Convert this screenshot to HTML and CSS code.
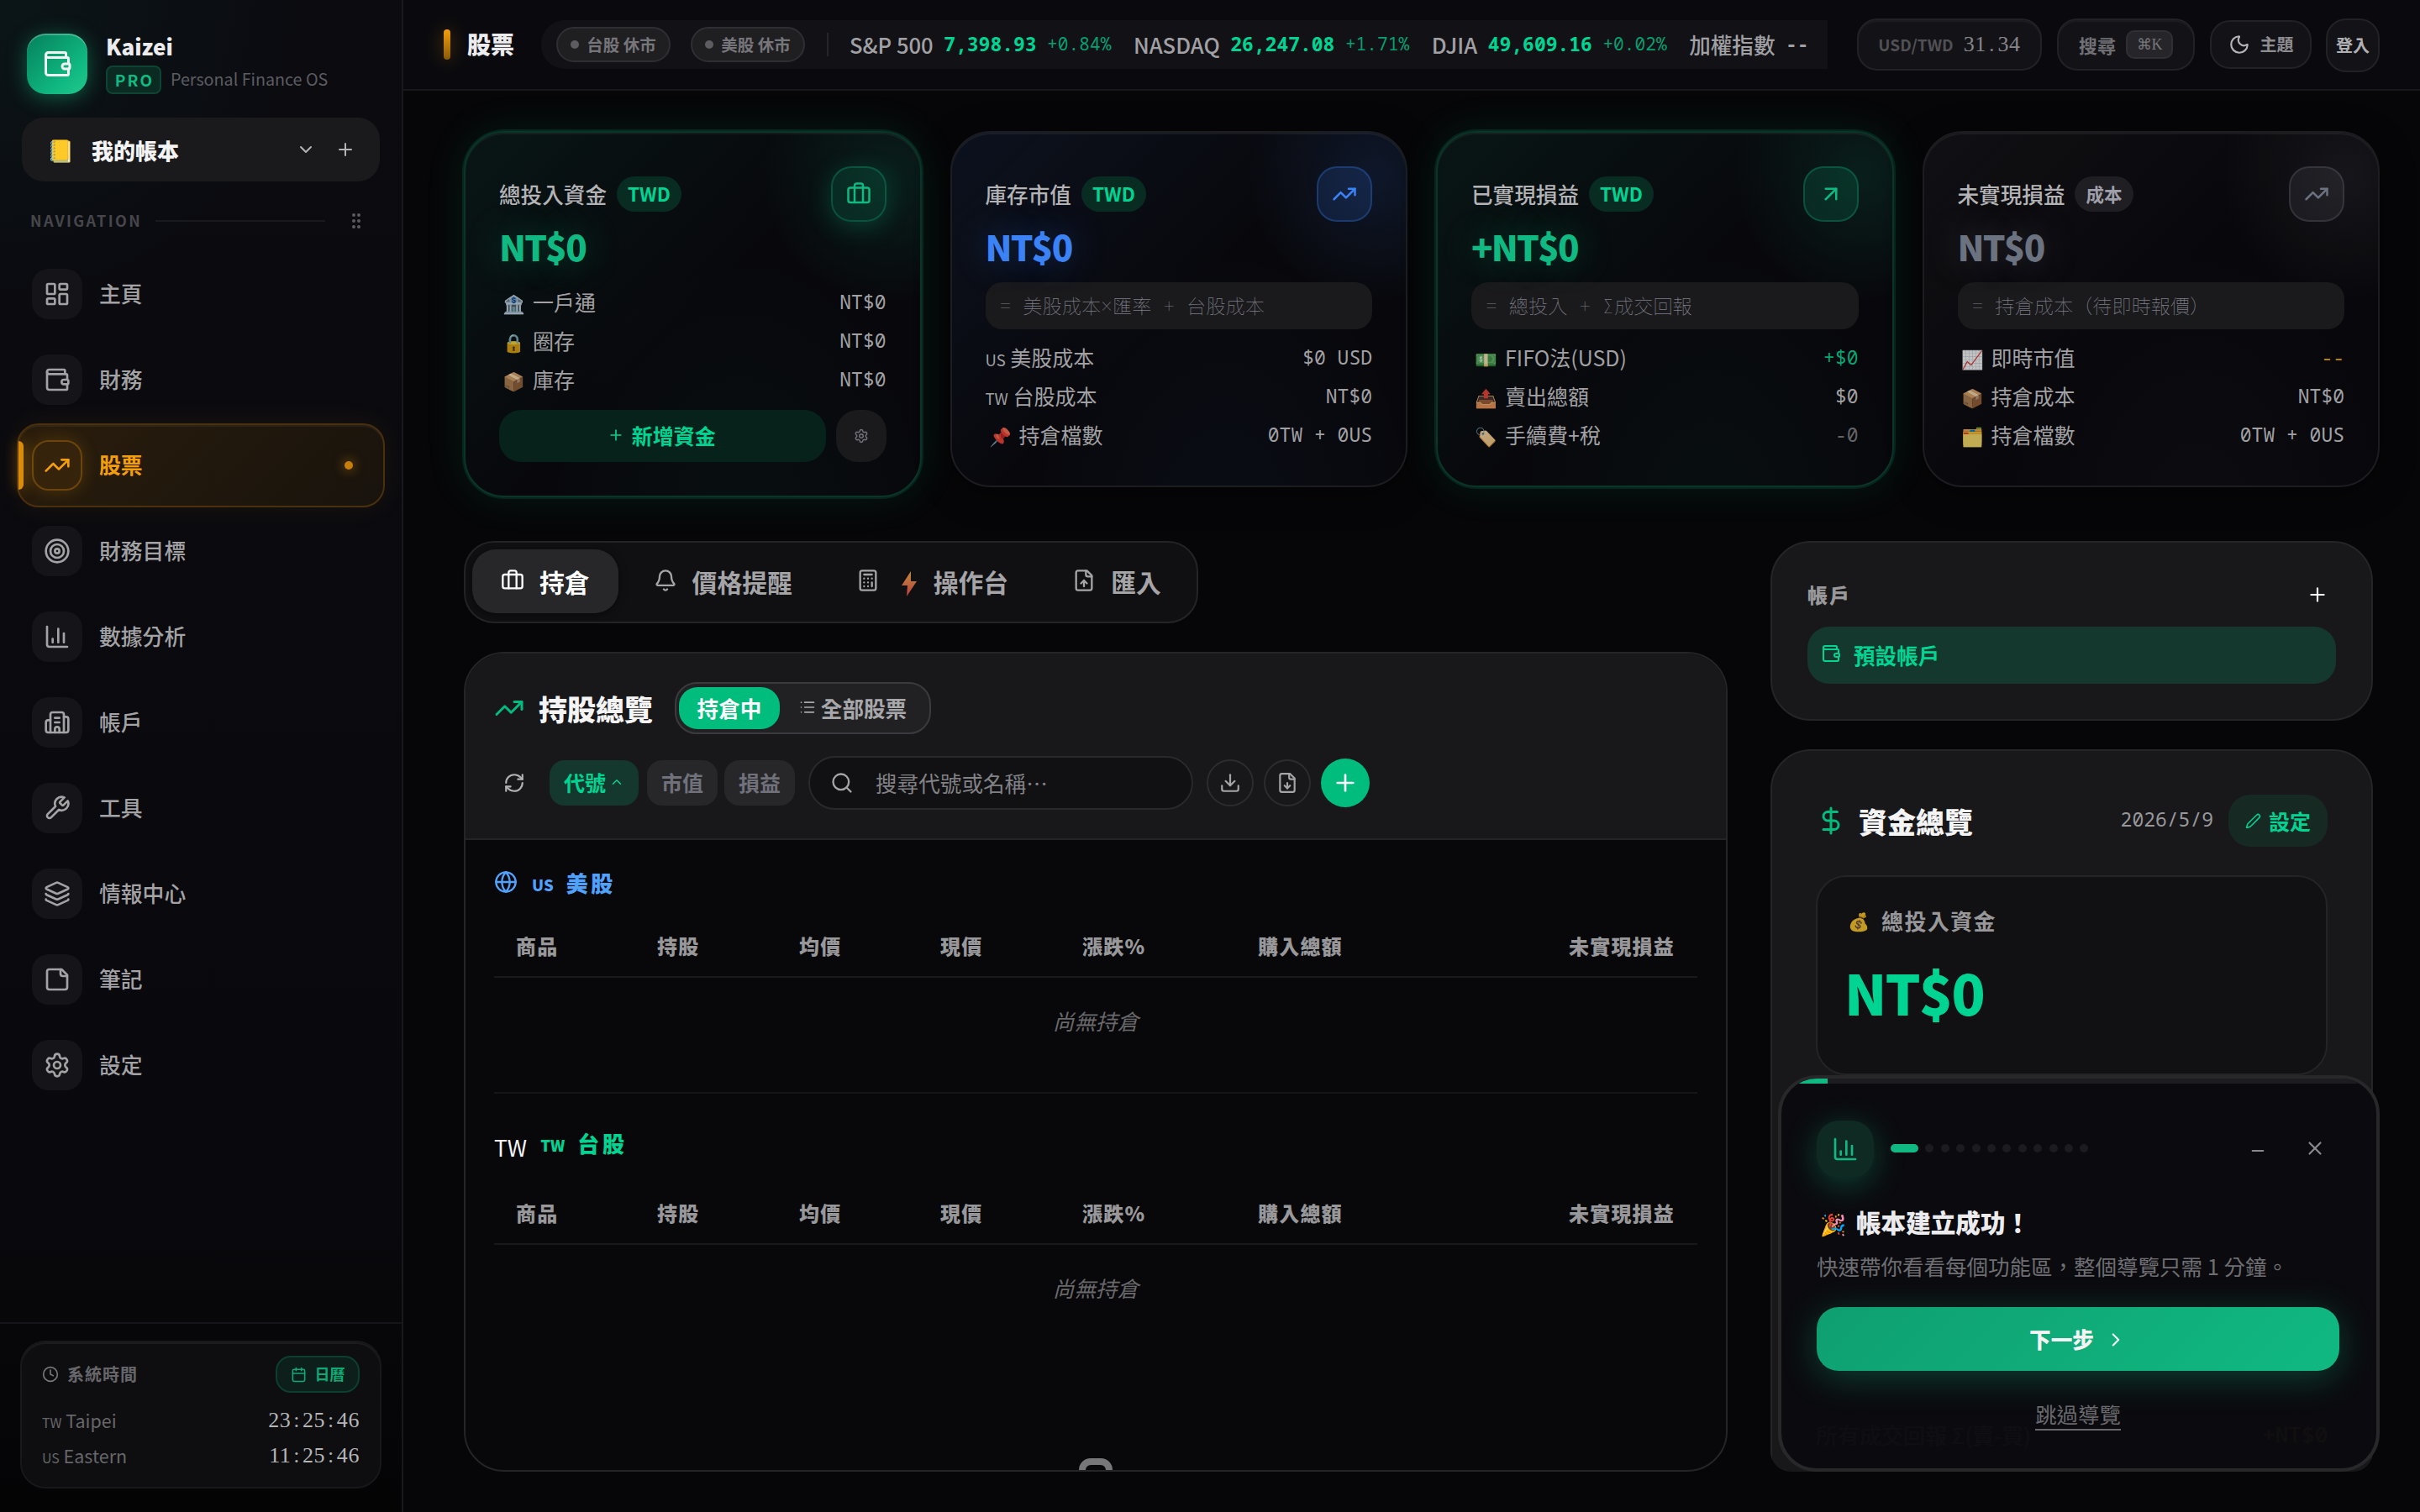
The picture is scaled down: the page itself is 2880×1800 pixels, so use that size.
FILE: index.html
```html
<!DOCTYPE html>
<html lang="zh-Hant">
<head>
  <meta charset="UTF-8">
  <title>Kaizei - 股票</title>
  <link rel="stylesheet" href="styles.css">
</head>
<body>
  <!-- icon sprite -->
  <svg class="sprite" xmlns="http://www.w3.org/2000/svg">
    <symbol id="i-wallet" viewBox="0 0 24 24"><path d="M19 7V4a1 1 0 0 0-1-1H5a2 2 0 0 0 0 4h15a1 1 0 0 1 1 1v4h-3a2 2 0 0 0 0 4h3a1 1 0 0 0 1-1v-2a1 1 0 0 0-1-1"/><path d="M3 5v14a2 2 0 0 0 2 2h15a1 1 0 0 0 1-1v-4"/></symbol>
    <symbol id="i-dash" viewBox="0 0 24 24"><rect width="7" height="9" x="3" y="3" rx="1"/><rect width="7" height="5" x="14" y="3" rx="1"/><rect width="7" height="9" x="14" y="12" rx="1"/><rect width="7" height="5" x="3" y="16" rx="1"/></symbol>
    <symbol id="i-trend" viewBox="0 0 24 24"><path d="M16 7h6v6"/><path d="m22 7-8.5 8.5-5-5L2 17"/></symbol>
    <symbol id="i-target" viewBox="0 0 24 24"><circle cx="12" cy="12" r="10"/><circle cx="12" cy="12" r="6"/><circle cx="12" cy="12" r="2"/></symbol>
    <symbol id="i-chart" viewBox="0 0 24 24"><path d="M3 3v16a2 2 0 0 0 2 2h16"/><path d="M13 17V5"/><path d="M18 17V9"/><path d="M8 17v-3"/></symbol>
    <symbol id="i-building" viewBox="0 0 24 24"><path d="M10 12h4"/><path d="M10 8h4"/><path d="M14 21v-3a2 2 0 0 0-4 0v3"/><path d="M6 10H4a2 2 0 0 0-2 2v7a2 2 0 0 0 2 2h16a2 2 0 0 0 2-2V9a2 2 0 0 0-2-2h-2"/><path d="M6 21V5a2 2 0 0 1 2-2h8a2 2 0 0 1 2 2v16"/></symbol>
    <symbol id="i-wrench" viewBox="0 0 24 24"><path d="M14.7 6.3a1 1 0 0 0 0 1.4l1.6 1.6a1 1 0 0 0 1.4 0l3.77-3.77a6 6 0 0 1-7.94 7.94l-6.91 6.91a2.12 2.12 0 0 1-3-3l6.91-6.91a6 6 0 0 1 7.94-7.94l-3.76 3.76z"/></symbol>
    <symbol id="i-layers" viewBox="0 0 24 24"><path d="M12.83 2.18a2 2 0 0 0-1.66 0L2.6 6.08a1 1 0 0 0 0 1.83l8.58 3.91a2 2 0 0 0 1.66 0l8.58-3.9a1 1 0 0 0 0-1.83z"/><path d="M2 12a1 1 0 0 0 .58.91l8.6 3.91a2 2 0 0 0 1.65 0l8.58-3.9A1 1 0 0 0 22 12"/><path d="M2 17a1 1 0 0 0 .58.91l8.6 3.91a2 2 0 0 0 1.65 0l8.58-3.9A1 1 0 0 0 22 17"/></symbol>
    <symbol id="i-note" viewBox="0 0 24 24"><path d="M16 3H5a2 2 0 0 0-2 2v14a2 2 0 0 0 2 2h14a2 2 0 0 0 2-2V8z"/><path d="M15 3v4a2 2 0 0 0 2 2h4"/></symbol>
    <symbol id="i-gear" viewBox="0 0 24 24"><path d="M9.67 4.14a2.34 2.34 0 0 1 4.66 0 2.34 2.34 0 0 0 3.32 1.91 2.34 2.34 0 0 1 2.33 4.03 2.34 2.34 0 0 0 0 3.84 2.34 2.34 0 0 1-2.33 4.03 2.34 2.34 0 0 0-3.32 1.92 2.34 2.34 0 0 1-4.66 0 2.34 2.34 0 0 0-3.32-1.92 2.34 2.34 0 0 1-2.33-4.03 2.34 2.34 0 0 0 0-3.83 2.34 2.34 0 0 1 2.33-4.04 2.34 2.34 0 0 0 3.32-1.91"/><circle cx="12" cy="12" r="3"/></symbol>
    <symbol id="i-down" viewBox="0 0 24 24"><path d="m6 9 6 6 6-6"/></symbol>
    <symbol id="i-up" viewBox="0 0 24 24"><path d="m18 15-6-6-6 6"/></symbol>
    <symbol id="i-right" viewBox="0 0 24 24"><path d="m9 18 6-6-6-6"/></symbol>
    <symbol id="i-plus" viewBox="0 0 24 24"><path d="M5 12h14"/><path d="M12 5v14"/></symbol>
    <symbol id="i-minus" viewBox="0 0 24 24"><path d="M5 12h14"/></symbol>
    <symbol id="i-x" viewBox="0 0 24 24"><path d="M18 6 6 18"/><path d="m6 6 12 12"/></symbol>
    <symbol id="i-grip" viewBox="0 0 24 24"><circle cx="9" cy="12" r="1"/><circle cx="9" cy="5" r="1"/><circle cx="9" cy="19" r="1"/><circle cx="15" cy="12" r="1"/><circle cx="15" cy="5" r="1"/><circle cx="15" cy="19" r="1"/></symbol>
    <symbol id="i-clock" viewBox="0 0 24 24"><circle cx="12" cy="12" r="10"/><path d="M12 6v6l4 2"/></symbol>
    <symbol id="i-cal" viewBox="0 0 24 24"><path d="M8 2v4"/><path d="M16 2v4"/><rect width="18" height="18" x="3" y="4" rx="2"/><path d="M3 10h18"/></symbol>
    <symbol id="i-moon" viewBox="0 0 24 24"><path d="M20.99 12.49a9 9 0 1 1-9.48-9.48c.4-.02.62.46.4.8a6 6 0 0 0 8.27 8.27c.35-.21.83 0 .81.41"/></symbol>
    <symbol id="i-case" viewBox="0 0 24 24"><path d="M16 20V4a2 2 0 0 0-2-2h-4a2 2 0 0 0-2 2v16"/><rect width="20" height="14" x="2" y="6" rx="2"/></symbol>
    <symbol id="i-upright" viewBox="0 0 24 24"><path d="M7 7h10v10"/><path d="M7 17 17 7"/></symbol>
    <symbol id="i-bell" viewBox="0 0 24 24"><path d="M10.27 21a2 2 0 0 0 3.46 0"/><path d="M3.26 15.33A1 1 0 0 0 4 17h16a1 1 0 0 0 .74-1.67C19.41 13.96 18 12.5 18 8A6 6 0 0 0 6 8c0 4.5-1.41 5.96-2.74 7.33"/></symbol>
    <symbol id="i-calc" viewBox="0 0 24 24"><rect width="16" height="20" x="4" y="2" rx="2"/><path d="M8 6h8M16 14v4M16 10h.01M12 10h.01M8 10h.01M12 14h.01M8 14h.01M12 18h.01M8 18h.01"/></symbol>
    <symbol id="i-fileup" viewBox="0 0 24 24"><path d="M15 2H6a2 2 0 0 0-2 2v16a2 2 0 0 0 2 2h12a2 2 0 0 0 2-2V7Z"/><path d="M14 2v4a2 2 0 0 0 2 2h4"/><path d="M12 12v6"/><path d="m15 15-3-3-3 3"/></symbol>
    <symbol id="i-filedown" viewBox="0 0 24 24"><path d="M15 2H6a2 2 0 0 0-2 2v16a2 2 0 0 0 2 2h12a2 2 0 0 0 2-2V7Z"/><path d="M14 2v4a2 2 0 0 0 2 2h4"/><path d="M12 18v-6"/><path d="m9 15 3 3 3-3"/></symbol>
    <symbol id="i-list" viewBox="0 0 24 24"><path d="M3 5h.01M3 12h.01M3 19h.01M8 5h13M8 12h13M8 19h13"/></symbol>
    <symbol id="i-refresh" viewBox="0 0 24 24"><path d="M3 12a9 9 0 0 1 9-9 9.75 9.75 0 0 1 6.74 2.74L21 8"/><path d="M21 3v5h-5"/><path d="M21 12a9 9 0 0 1-9 9 9.75 9.75 0 0 1-6.74-2.74L3 16"/><path d="M8 16H3v5"/></symbol>
    <symbol id="i-search" viewBox="0 0 24 24"><circle cx="11" cy="11" r="8"/><path d="m21 21-4.3-4.3"/></symbol>
    <symbol id="i-download" viewBox="0 0 24 24"><path d="M12 15V3"/><path d="M21 15v4a2 2 0 0 1-2 2H5a2 2 0 0 1-2-2v-4"/><path d="m7 10 5 5 5-5"/></symbol>
    <symbol id="i-globe" viewBox="0 0 24 24"><circle cx="12" cy="12" r="10"/><path d="M12 2a14.5 14.5 0 0 0 0 20 14.5 14.5 0 0 0 0-20"/><path d="M2 12h20"/></symbol>
    <symbol id="i-dollar" viewBox="0 0 24 24"><path d="M12 2v20"/><path d="M17 5H9.5a3.5 3.5 0 0 0 0 7h5a3.5 3.5 0 0 1 0 7H6"/></symbol>
    <symbol id="i-pencil" viewBox="0 0 24 24"><path d="M21.17 6.81a1 1 0 0 0-3.98-3.98L3.84 16.17a2 2 0 0 0-.5.83l-1.32 4.35a.5.5 0 0 0 .62.62l4.35-1.32a2 2 0 0 0 .83-.5z"/></symbol>
  </svg>

  <div class="app">
    <aside class="sidebar">
      <div class="brand">
        <div class="logo"><svg class="icon"><use href="#i-wallet"/></svg></div>
        <div class="brand-text">
          <div class="brand-name">Kaizei</div>
          <div class="brand-sub"><span class="pro">PRO</span><span>Personal Finance OS</span></div>
        </div>
      </div>

      <div class="ledger">
        <span class="ledger-emoji">📒</span>
        <span class="ledger-name">我的帳本</span>
        <svg class="icon"><use href="#i-down"/></svg>
        <svg class="icon"><use href="#i-plus"/></svg>
      </div>

      <div class="nav-title"><span>NAVIGATION</span><i></i><svg class="icon"><use href="#i-grip"/></svg></div>

      <nav class="nav">
        <a class="nav-item"><span class="nav-icon"><svg class="icon"><use href="#i-dash"/></svg></span><span>主頁</span></a>
        <a class="nav-item"><span class="nav-icon"><svg class="icon"><use href="#i-wallet"/></svg></span><span>財務</span></a>
        <a class="nav-item active"><span class="nav-icon"><svg class="icon"><use href="#i-trend"/></svg></span><span>股票</span><i class="nav-dot"></i></a>
        <a class="nav-item"><span class="nav-icon"><svg class="icon"><use href="#i-target"/></svg></span><span>財務目標</span></a>
        <a class="nav-item"><span class="nav-icon"><svg class="icon"><use href="#i-chart"/></svg></span><span>數據分析</span></a>
        <a class="nav-item"><span class="nav-icon"><svg class="icon"><use href="#i-building"/></svg></span><span>帳戶</span></a>
        <a class="nav-item"><span class="nav-icon"><svg class="icon"><use href="#i-wrench"/></svg></span><span>工具</span></a>
        <a class="nav-item"><span class="nav-icon"><svg class="icon"><use href="#i-layers"/></svg></span><span>情報中心</span></a>
        <a class="nav-item"><span class="nav-icon"><svg class="icon"><use href="#i-note"/></svg></span><span>筆記</span></a>
        <a class="nav-item"><span class="nav-icon"><svg class="icon"><use href="#i-gear"/></svg></span><span>設定</span></a>
      </nav>

      <div class="side-foot">
        <div class="clock-card">
          <div class="clock-head">
            <svg class="icon"><use href="#i-clock"/></svg>
            <span class="clock-title">系統時間</span>
            <span class="cal-btn"><svg class="icon"><use href="#i-cal"/></svg>日曆</span>
          </div>
          <div class="clock-row"><span><small>TW</small> Taipei</span><span class="digits">23<b>:</b>25<b>:</b>46</span></div>
          <div class="clock-row"><span><small>US</small> Eastern</span><span class="digits">11<b>:</b>25<b>:</b>46</span></div>
        </div>
      </div>
    </aside>

    <div class="main">
      <header class="topbar">
        <i class="title-bar"></i>
        <h1 class="page-title">股票</h1>
        <div class="ticker">
          <span class="market"><i></i>台股 休市</span>
          <span class="market"><i></i>美股 休市</span>
          <span class="divider"></span>
          <span class="quote">S&amp;P 500 <b>7,398.93</b><em>+0.84%</em></span>
          <span class="quote">NASDAQ <b>26,247.08</b><em>+1.71%</em></span>
          <span class="quote">DJIA <b>49,609.16</b><em>+0.02%</em></span>
          <span class="quote none">加權指數 <b>--</b></span>
        </div>
        <div class="top-btn fx"><span>USD/TWD</span><span class="digits">31<b>.</b>34</span></div>
        <div class="top-btn find">搜尋<kbd>⌘K</kbd></div>
        <div class="top-btn theme"><svg class="icon"><use href="#i-moon"/></svg>主題</div>
        <div class="top-btn login">登入</div>
      </header>

      <div class="content">
        <section class="cards">
          <div class="card green glow">
            <div class="card-head">總投入資金<span class="pill">TWD</span><span class="card-icon"><svg class="icon"><use href="#i-case"/></svg></span></div>
            <div class="card-value">NT$0</div>
            <div class="rows">
              <div class="row"><span><i class="emo">🏦</i>一戶通</span><code>NT$0</code></div>
              <div class="row"><span><i class="emo">🔒</i>圈存</span><code>NT$0</code></div>
              <div class="row"><span><i class="emo">📦</i>庫存</span><code>NT$0</code></div>
            </div>
            <div class="card-actions">
              <span class="add-btn"><svg class="icon"><use href="#i-plus"/></svg>新增資金</span>
              <span class="gear-btn"><svg class="icon"><use href="#i-gear"/></svg></span>
            </div>
          </div>

          <div class="card blue">
            <div class="card-head">庫存市值<span class="pill">TWD</span><span class="card-icon"><svg class="icon"><use href="#i-trend"/></svg></span></div>
            <div class="card-value">NT$0</div>
            <div class="formula">= 美股成本×匯率 + 台股成本</div>
            <div class="rows">
              <div class="row"><span><small>US</small> 美股成本</span><code>$0 USD</code></div>
              <div class="row"><span><small>TW</small> 台股成本</span><code>NT$0</code></div>
              <div class="row"><span><i class="emo">📌</i>持倉檔數</span><code>0TW + 0US</code></div>
            </div>
          </div>

          <div class="card green glow soft">
            <div class="card-head">已實現損益<span class="pill">TWD</span><span class="card-icon"><svg class="icon"><use href="#i-upright"/></svg></span></div>
            <div class="card-value">+NT$0</div>
            <div class="formula">= 總投入 + Σ成交回報</div>
            <div class="rows">
              <div class="row"><span><i class="emo">💵</i>FIFO法(USD)</span><code class="up">+$0</code></div>
              <div class="row"><span><i class="emo">📤</i>賣出總額</span><code>$0</code></div>
              <div class="row"><span><i class="emo">🏷️</i>手續費+稅</span><code class="dim">-0</code></div>
            </div>
          </div>

          <div class="card gray">
            <div class="card-head">未實現損益<span class="pill">成本</span><span class="card-icon"><svg class="icon"><use href="#i-trend"/></svg></span></div>
            <div class="card-value">NT$0</div>
            <div class="formula">= 持倉成本（待即時報價）</div>
            <div class="rows">
              <div class="row"><span><i class="emo">📈</i>即時市值</span><code class="warn">--</code></div>
              <div class="row"><span><i class="emo">📦</i>持倉成本</span><code>NT$0</code></div>
              <div class="row"><span><i class="emo">🗂️</i>持倉檔數</span><code>0TW + 0US</code></div>
            </div>
          </div>
        </section>

        <section class="columns">
          <div class="left">
            <div class="tabs">
              <span class="tab active"><svg class="icon"><use href="#i-case"/></svg>持倉</span>
              <span class="tab"><svg class="icon"><use href="#i-bell"/></svg>價格提醒</span>
              <span class="tab"><svg class="icon"><use href="#i-calc"/></svg><svg class="bolt" viewBox="0 0 18 30"><defs><linearGradient id="bolt-fill" x1="0" y1="0" x2="0" y2="1"><stop offset="0" stop-color="#c08a3a"/><stop offset="1" stop-color="#bb4040"/></linearGradient></defs><path fill="url(#bolt-fill)" d="M11 0 0 17h7L6 30l12-18h-7z"/></svg>操作台</span>
              <span class="tab"><svg class="icon"><use href="#i-fileup"/></svg>匯入</span>
            </div>

            <div class="holdings">
              <div class="holdings-head">
                <div class="head-line">
                  <svg class="icon"><use href="#i-trend"/></svg>
                  <h2>持股總覽</h2>
                  <div class="segment"><span class="on">持倉中</span><span><svg class="icon"><use href="#i-list"/></svg>全部股票</span></div>
                </div>
                <div class="tool-line">
                  <span class="refresh"><svg class="icon"><use href="#i-refresh"/></svg></span>
                  <span class="chip on">代號<svg class="icon"><use href="#i-up"/></svg></span>
                  <span class="chip">市值</span>
                  <span class="chip">損益</span>
                  <div class="search"><svg class="icon"><use href="#i-search"/></svg>搜尋代號或名稱⋯</div>
                  <span class="round"><svg class="icon"><use href="#i-download"/></svg></span>
                  <span class="round"><svg class="icon"><use href="#i-filedown"/></svg></span>
                  <span class="round add"><svg class="icon"><use href="#i-plus"/></svg></span>
                </div>
              </div>

              <div class="market-block">
                <div class="market-title us"><svg class="icon"><use href="#i-globe"/></svg><small>US</small><span>美股</span></div>
                <div class="thead"><span>商品</span><span>持股</span><span>均價</span><span>現價</span><span>漲跌%</span><span>購入總額</span><span>未實現損益</span></div>
                <div class="empty">尚無持倉</div>
              </div>
              <div class="market-block second">
                <div class="market-title tw"><span class="flag">TW</span><small>TW</small><span>台股</span></div>
                <div class="thead"><span>商品</span><span>持股</span><span>均價</span><span>現價</span><span>漲跌%</span><span>購入總額</span><span>未實現損益</span></div>
                <div class="empty">尚無持倉</div>
              </div>
              <i class="loader"></i>
            </div>
          </div>

          <div class="right">
            <div class="accounts">
              <div class="accounts-head">帳戶<svg class="icon"><use href="#i-plus"/></svg></div>
              <div class="account"><svg class="icon"><use href="#i-wallet"/></svg>預設帳戶</div>
            </div>

            <div class="funds">
              <div class="funds-head">
                <svg class="icon"><use href="#i-dollar"/></svg>
                <h2>資金總覽</h2>
                <code>2026/5/9</code>
                <span class="set-btn"><svg class="icon"><use href="#i-pencil"/></svg>設定</span>
              </div>
              <div class="total">
                <div class="total-label"><i>💰</i>總投入資金</div>
                <div class="total-value">NT$0</div>
              </div>
              <div class="funds-row"><span>所有成交回報 Σ(賣-買)</span><code>+NT$0</code></div>
            </div>
          </div>
        </section>
      </div>
    </div>
  </div>

  <!-- onboarding tour -->
  <div class="tour">
    <div class="tour-progress"><i></i></div>
    <div class="tour-top">
      <span class="tour-icon"><svg class="icon"><use href="#i-chart"/></svg></span>
      <div class="dots"><i class="on"></i><i></i><i></i><i></i><i></i><i></i><i></i><i></i><i></i><i></i><i></i><i></i></div>
      <svg class="icon min"><use href="#i-minus"/></svg>
      <svg class="icon"><use href="#i-x"/></svg>
    </div>
    <h3><i>🎉</i>帳本建立成功！</h3>
    <p>快速帶你看看每個功能區，整個導覽只需 1 分鐘。</p>
    <div class="next">下一步<svg class="icon"><use href="#i-right"/></svg></div>
    <div class="skip"><span>跳過導覽</span></div>
  </div>
</body>
</html>
```

FILE: styles.css
```css
* {
  box-sizing: border-box;
}

body {
  margin: 0;
  width: 2880px;
  height: 1800px;
  overflow: hidden;
  background: #060608;
  color: #f4f4f5;
  font-family: "Noto Sans CJK TC", "Noto Sans", sans-serif;
  font-size: 26px;
  line-height: 1.2;
  position: relative;
}

h1, h2, h3, p {
  margin: 0;
}

i, em {
  font-style: normal;
}

code {
  font-family: "Noto Sans Mono", "Noto Sans Mono CJK TC", "DejaVu Sans Mono", monospace;
}

.sprite {
  display: none;
}

.icon {
  width: 32px;
  height: 32px;
  flex: none;
  fill: none;
  stroke: currentColor;
  stroke-width: 2;
  stroke-linecap: round;
  stroke-linejoin: round;
}

.app {
  display: flex;
  height: 100%;
}

/* ---------- sidebar ---------- */

.sidebar {
  width: 480px;
  flex: none;
  display: flex;
  flex-direction: column;
  border-right: 2px solid #19191d;
  background: radial-gradient(circle at 0 0, rgba(16, 185, 129, 0.06), transparent 360px), linear-gradient(180deg, #0b0b10 0%, #09090d 80%, #040405 100%);
}

.brand {
  display: flex;
  gap: 22px;
  padding: 40px 0 0 32px;
  height: 140px;
}

.logo {
  width: 72px;
  height: 72px;
  border-radius: 22px;
  display: flex;
  align-items: center;
  justify-content: center;
  background: linear-gradient(135deg, #05805c, #10b981 70%, #22c98d);
  box-shadow: inset 0 2px 0 rgba(255, 255, 255, 0.25), 0 4px 24px rgba(16, 185, 129, 0.45);
}

.logo .icon {
  width: 36px;
  height: 36px;
}

.brand-name {
  font-size: 26px;
  font-weight: 900;
  line-height: 30px;
  color: #ececee;
}

.brand-sub {
  display: flex;
  align-items: center;
  gap: 11px;
  margin-top: 8px;
  font-size: 19.7px;
  color: #5c5c61;
}

.brand-sub span:last-child {
  margin-top: -2px;
}

.pro {
  height: 34px;
  line-height: 30px;
  width: 66px;
  padding-left: 2px;
  text-align: center;
  border: 2px solid #0d4433;
  border-radius: 8px;
  background: #0b2a21;
  color: #10b981;
  font-size: 19px;
  font-weight: 700;
  letter-spacing: 2px;
}

.ledger {
  display: flex;
  align-items: center;
  margin: 0 26px;
  height: 76px;
  padding: 0 29px 0 30px;
  border-radius: 26px;
  background: #1a1a1c;
}

.ledger-emoji {
  width: 53px;
  font-size: 26px;
}

.ledger-name {
  flex: 1;
  margin-top: 2px;
  font-weight: 900;
}

.ledger .icon {
  width: 24px;
  height: 24px;
  margin-left: 23px;
  color: #b4b4b8;
}

.nav-title {
  display: flex;
  align-items: center;
  gap: 18px;
  height: 94px;
  padding: 0 42px 0 36px;
  color: #46464b;
  font-size: 18px;
  font-weight: 700;
  letter-spacing: 2.4px;
}

.nav-title i {
  flex: 1;
  height: 2px;
  margin: 0 7px 0 -2px;
  background: #1a1a1e;
}

.nav-title .icon {
  width: 24px;
  height: 24px;
  color: #5b5b60;
}

.nav {
  flex: 1;
  display: flex;
  flex-direction: column;
  gap: 2px;
  margin-top: -10px;
  padding: 0 20px;
}

.nav-item {
  position: relative;
  display: flex;
  align-items: center;
  gap: 20px;
  height: 100px;
  padding: 0 36px 0 16px;
  border: 2px solid transparent;
  border-radius: 26px;
  font-size: 25.8px;
  font-weight: 500;
  color: #a3a3a6;
}

.nav-icon {
  width: 60px;
  height: 60px;
  border-radius: 20px;
  display: flex;
  align-items: center;
  justify-content: center;
  background: #151519;
}

.nav-icon + span {
  margin-bottom: 2px;
}

.nav-item.active {
  color: #f59e0b;
  font-weight: 700;
  border-color: #4a300c;
  background: linear-gradient(135deg, #2a1d0c, #18130d);
  box-shadow: inset 0 2px 0 rgba(255, 255, 255, 0.05), 0 0 32px rgba(245, 158, 11, 0.08);
}

.nav-item.active .nav-icon {
  background: #35230b;
  border: 2px solid #6b450d;
  box-shadow: 0 0 20px rgba(245, 158, 11, 0.2);
}

/* accent bar on the left edge of the active item */
.nav-item.active::before {
  content: "";
  position: absolute;
  left: 0;
  top: 19px;
  width: 6px;
  height: 58px;
  border-radius: 0 6px 6px 0;
  background: #d98b0a;
  box-shadow: 0 0 16px rgba(245, 158, 11, 0.5);
}

.nav-dot {
  width: 10px;
  height: 10px;
  margin-left: auto;
  border-radius: 50%;
  background: #c67f0a;
  box-shadow: 0 0 14px rgba(245, 158, 11, 0.7);
}

.side-foot {
  border-top: 2px solid #16161a;
  padding: 20px 24px 28px;
}

.clock-card {
  height: 176px;
  padding: 16px 24px 0;
  border: 2px solid #18181b;
  border-radius: 30px;
  background: #0e0e10;
  box-shadow: inset 0 2px 0 #1c1c1e;
  color: #66666a;
  font-size: 21.5px;
}

.clock-head {
  display: flex;
  align-items: center;
  gap: 10px;
  height: 44px;
  margin-bottom: 12px;
}

.clock-head > .icon {
  width: 20px;
  height: 20px;
  color: #77777b;
}

.clock-title {
  flex: 1;
  font-size: 20px;
  font-weight: 700;
  letter-spacing: 1px;
  color: #67676b;
}

.cal-btn {
  display: flex;
  align-items: center;
  justify-content: center;
  gap: 10px;
  width: 100px;
  height: 44px;
  border: 2px solid #0d3f30;
  border-radius: 18px;
  background: #0c1f1a;
  color: #10a976;
  font-size: 18px;
  font-weight: 700;
}

.cal-btn .icon {
  width: 19px;
  height: 19px;
}

.clock-row {
  display: flex;
  justify-content: space-between;
  align-items: center;
  height: 42px;
}

.clock-row small,
.row small {
  font-size: 0.74em;
}

.digits {
  font-family: "Liberation Serif", serif;
  font-size: 26px;
  letter-spacing: 0.6px;
  color: #b5b5b8;
}

.digits b {
  display: inline-block;
  width: 13.6px;
  text-align: center;
  font-weight: 400;
}

/* ---------- top bar ---------- */

.main {
  flex: 1;
  display: flex;
  flex-direction: column;
  min-width: 0;
}

.topbar {
  display: flex;
  align-items: center;
  height: 108px;
  padding: 0 48px;
  border-bottom: 2px solid #18181c;
  background: #0a0a0e;
}

.title-bar {
  width: 8px;
  height: 36px;
  border-radius: 4px;
  background: linear-gradient(180deg, #f59e0b, #8a5a08);
  box-shadow: 0 0 20px rgba(245, 158, 11, 0.35);
}

.page-title {
  width: 88px;
  margin-left: 20px;
  font-size: 28px;
  font-weight: 900;
  color: #ececee;
  white-space: nowrap;
}

.ticker {
  display: flex;
  align-items: center;
  width: 1532px;
  height: 58px;
  padding-left: 18px;
  overflow: hidden;
  white-space: nowrap;
  border-radius: 28px 0 0 28px;
  background: #121216;
}

.market {
  display: flex;
  align-items: center;
  justify-content: center;
  flex: none;
  gap: 9px;
  width: 136px;
  height: 42px;
  margin-right: 24px;
  border: 2px solid #2f2f33;
  border-radius: 21px;
  background: #1f1f22;
  color: #76767a;
  font-size: 19.5px;
  font-weight: 700;
}

.market i {
  width: 10px;
  height: 10px;
  border-radius: 50%;
  background: #5d5d61;
}

.divider {
  flex: none;
  width: 2px;
  height: 28px;
  margin: 0 25px 0 2px;
  background: #26262a;
}

.quote {
  display: flex;
  align-items: center;
  flex: none;
  gap: 12.5px;
  margin-right: 26.5px;
  color: #a1a1a5;
  font-size: 25.6px;
  font-weight: 500;
}

.quote b,
.quote em {
  font-family: "Noto Sans Mono", "Noto Sans Mono CJK TC", "DejaVu Sans Mono", monospace;
  color: #00d492;
  font-size: 23px;
  font-weight: 700;
  line-height: 30px;
  margin-bottom: 3px;
}

.quote em {
  color: #069f70;
  font-size: 21.2px;
  font-weight: 400;
}

.quote.none b {
  color: #a1a1a5;
}

.top-btn {
  display: flex;
  align-items: center;
  justify-content: center;
  flex: none;
  height: 62px;
  margin-left: 18px;
  border: 2px solid #222226;
  border-radius: 24px;
  background: #131317;
  font-size: 20px;
  font-weight: 700;
  color: #8e8e92;
}

.fx {
  width: 220px;
  margin-left: 35px;
  gap: 12px;
  color: #505055;
  box-shadow: inset 0 2px 0 #1c1c20;
  font-size: 19px;
}

.fx .digits {
  color: #858589;
  font-weight: 400;
}

.find {
  width: 164px;
  gap: 12px;
  font-size: 22px;
  color: #707074;
  box-shadow: inset 0 2px 0 #1c1c20;
}

.find kbd {
  width: 56px;
  height: 34px;
  line-height: 30px;
  text-align: center;
  border: 2px solid #2f2f34;
  border-radius: 10px;
  background: #26262a;
  font-family: "Liberation Serif", serif;
  font-size: 18px;
  font-weight: 400;
  color: #77777b;
}

.theme {
  width: 121px;
  height: 58px;
  gap: 12px;
}

.theme .icon {
  width: 26px;
  height: 26px;
  color: #b5b5b8;
}

.login {
  width: 64px;
  height: 64px;
  margin: 2px 0 0 17px;
  color: #b0b0b4;
}

/* ---------- summary cards ---------- */

.content {
  flex: 1;
  padding: 48px 48px 48px 72px;
  display: flex;
  flex-direction: column;
  gap: 52px;
  min-height: 0;
}

.cards {
  display: grid;
  grid-template-columns: repeat(4, 1fr);
  gap: 34px;
  align-items: start;
}

.card {
  --tint: 113, 113, 122;
  --accent: #6b7280;
  padding: 40px;
  border: 2px solid #1d1d21;
  border-radius: 48px;
  background:
    radial-gradient(circle at 93% 12%, rgba(var(--tint), 0.13), transparent 150px),
    radial-gradient(ellipse at 60% 110%, rgba(var(--tint), 0.04), transparent 50%),
    linear-gradient(135deg, rgba(var(--tint), 0.08), transparent 50%),
    #08080c;
  box-shadow: inset 0 2px 0 rgba(255, 255, 255, 0.06), 0 8px 40px rgba(0, 0, 0, 0.4);
}

.card.green {
  --tint: 16, 185, 129;
  --accent: #10b981;
}

.card.blue {
  --tint: 59, 130, 246;
  --accent: #3b82f6;
}

.card.glow {
  border-color: #0b3528;
  box-shadow: inset 0 2px 0 rgba(255, 255, 255, 0.05), 0 0 0 2px rgba(16, 185, 129, 0.14), 0 0 48px rgba(16, 185, 129, 0.12);
}

.card-head {
  display: flex;
  align-items: center;
  height: 66px;
  font-size: 25.6px;
  font-weight: 500;
  color: #b4b4b7;
}

.pill {
  height: 42px;
  line-height: 41px;
  margin-left: 12px;
  padding: 0 13px;
  border-radius: 21px;
  background: #082c22;
  color: #00d492;
  font-size: 22.6px;
  font-weight: 700;
}

.gray .pill {
  background: #1f1f23;
  color: #9f9fa9;
  font-size: 21.5px;
}

.card-icon {
  width: 66px;
  height: 66px;
  margin-left: auto;
  border: 2px solid rgba(var(--tint), 0.28);
  border-radius: 24px;
  display: flex;
  align-items: center;
  justify-content: center;
  background: rgba(var(--tint), 0.14);
  color: var(--accent);
}

.card-icon .icon {
  width: 30px;
  height: 30px;
}

.green .card-icon {
  box-shadow: 0 6px 28px rgba(16, 185, 129, 0.25);
}

.soft .card-icon {
  box-shadow: none;
}

.card-value {
  height: 60px;
  line-height: 53px;
  margin-top: 2px;
  font-size: 42px;
  font-weight: 900;
  letter-spacing: -1.8px;
  color: var(--accent);
  text-shadow: 0 0 40px rgba(var(--tint), 0.35);
}

.formula {
  height: 56px;
  line-height: 57px;
  margin-top: 10px;
  padding-left: 17px;
  border-radius: 20px;
  background: #1a1a1c;
  color: #7e7e88;
  font-family: "Noto Sans Mono", "Noto Sans CJK TC", monospace;
  font-size: 23.2px;
  font-weight: 100;
}

.rows {
  display: flex;
  flex-direction: column;
  gap: 8px;
  margin-top: 14px;
}

.row {
  display: flex;
  align-items: center;
  justify-content: space-between;
  height: 38px;
  font-size: 25px;
  color: #a1a1a4;
}

.row code {
  margin-top: 2px;
  font-size: 23px;
}

.emo {
  display: inline-block;
  width: 40px;
  padding-left: 4px;
  font-size: 21.5px;
  opacity: 0.75;
}

.row .up {
  color: #06a574;
}

.row .dim {
  color: #65656a;
}

.row .warn {
  color: #b98305;
}

.card-actions {
  display: flex;
  gap: 12px;
  margin-top: 18px;
}

.formula + .rows {
  margin-bottom: 2px;
}

.add-btn,
.gear-btn {
  display: flex;
  align-items: center;
  justify-content: center;
  height: 62px;
}

.add-btn {
  flex: 1;
  gap: 9px;
  padding: 0 2px 2px 0;
  border-radius: 26px;
  background: #07221b;
  color: #00d492;
  font-size: 25px;
  font-weight: 700;
}

.add-btn .icon {
  width: 20px;
  height: 20px;
}

.gear-btn {
  width: 60px;
  border-radius: 26px;
  background: #1a1a1c;
  color: #71717b;
}

.gear-btn .icon {
  width: 18px;
  height: 18px;
}

/* ---------- tabs ---------- */

.columns {
  flex: 1;
  display: grid;
  grid-template-columns: 1504px 717px;
  gap: 51px;
  min-height: 0;
}

.left {
  display: flex;
  flex-direction: column;
  align-items: flex-start;
  gap: 34px;
  min-height: 0;
}

.tabs {
  display: flex;
  gap: 8px;
  width: 874px;
  height: 98px;
  padding: 8px;
  border: 2px solid #242427;
  border-radius: 36px;
  background: #101012;
}

.tab {
  display: flex;
  align-items: center;
  gap: 18px;
  height: 76px;
  padding: 2px 34px 0;
  border-radius: 28px;
  font-size: 29.8px;
  font-weight: 700;
  color: #a5a5a8;
}

.tab .icon {
  width: 28px;
  height: 28px;
  margin-bottom: 5px;
}

.tab.active {
  background: #27272a;
  color: #fff;
  box-shadow: 0 2px 10px rgba(0, 0, 0, 0.5);
}

.bolt {
  width: 18px;
  height: 30px;
  margin: 4px 2px 0 8px;
}

/* ---------- holdings ---------- */

.holdings {
  flex: 1;
  width: 100%;
  min-height: 0;
  display: flex;
  flex-direction: column;
  overflow: hidden;
  border: 2px solid #252528;
  border-radius: 48px;
  background: #08080a;
}

.holdings-head {
  flex: none;
  height: 222px;
  padding: 34px 34px 0;
  border-bottom: 2px solid #242427;
  background: #18181b;
}

.head-line {
  display: flex;
  align-items: center;
  height: 62px;
}

.head-line > .icon {
  width: 36px;
  height: 36px;
  color: #00bc7d;
}

.head-line h2 {
  width: 162px;
  margin: 2px 0 0 17px;
  font-size: 34px;
  font-weight: 900;
}

.segment {
  display: flex;
  align-items: center;
  width: 305px;
  height: 62px;
  padding: 0 3px;
  border: 2px solid #3a3a3f;
  border-radius: 26px;
  background: #212124;
  color: #a8a8ab;
  font-size: 25.6px;
  font-weight: 700;
}

.segment span {
  display: flex;
  align-items: center;
  justify-content: center;
  gap: 6px;
  width: 120px;
  height: 50px;
}

.segment span + span {
  width: 174px;
}

.segment .icon {
  width: 20px;
  height: 20px;
  margin-bottom: 3px;
}

.segment .on {
  border-radius: 22px;
  background: #00bc7d;
  color: #fff;
}

.tool-line {
  display: flex;
  align-items: center;
  height: 64px;
  margin-top: 26px;
}

.refresh {
  display: flex;
  width: 66px;
  padding-left: 11px;
  color: #b2b2b5;
}

.refresh .icon {
  width: 26px;
  height: 26px;
}

.chip {
  display: flex;
  align-items: center;
  justify-content: center;
  gap: 4px;
  width: 84px;
  height: 54px;
  margin: 0 8px 1px 0;
  padding-bottom: 2px;
  border-radius: 18px;
  background: #27272a;
  color: #71717b;
  font-size: 25px;
  font-weight: 700;
}

.chip.on {
  width: 106px;
  margin-right: 10px;
  background: #14382d;
  color: #00d492;
}

.chip .icon {
  width: 18px;
  height: 18px;
}

.search {
  display: flex;
  align-items: center;
  gap: 26px;
  width: 458px;
  height: 64px;
  margin: 0 16px 0 8px;
  padding-left: 24px;
  border: 2px solid #29292d;
  border-radius: 32px;
  background: #111113;
  color: #828286;
  font-size: 25.6px;
}

.search .icon {
  width: 28px;
  height: 28px;
  color: #a5a5a8;
}

.round {
  display: flex;
  align-items: center;
  justify-content: center;
  width: 56px;
  height: 56px;
  margin-right: 12px;
  border: 2px solid #2c2c30;
  border-radius: 50%;
  color: #a5a5a8;
}

.round .icon {
  width: 26px;
  height: 26px;
}

.round.add {
  width: 58px;
  height: 58px;
  border: 0;
  background: #00bc7d;
  color: #fff;
}

.round.add .icon {
  width: 32px;
  height: 32px;
}

.market-block {
  flex: none;
  height: 302px;
  margin: 0 34px;
  padding-top: 28px;
  border-bottom: 2px solid #151517;
}

.market-block.second {
  height: 434px;
  padding-top: 36px;
  border: 0;
}

.market-title {
  display: flex;
  align-items: center;
  height: 46px;
  margin-bottom: 24px;
  font-weight: 900;
}

.market-title small {
  margin: 5px 15px 0 17px;
  font-size: 18.5px;
}

.market-title span:last-child {
  letter-spacing: 3.6px;
}

.market-title.us {
  color: #51a2ff;
}

.market-title.us .icon {
  width: 28px;
  height: 28px;
  margin-bottom: 3px;
}

.market-title.tw {
  margin-bottom: 32px;
  color: #00d492;
}

.flag {
  margin-top: 9px;
  font-size: 26.5px;
  font-weight: 400;
  color: #f4f4f5;
}

.market-title.tw small {
  margin-left: 16px;
}

.thead {
  display: grid;
  grid-template-columns: 168px 169px 168px 169px 209px 370px 1fr;
  align-items: center;
  height: 66px;
  padding: 0 0 7px 26px;
  border-bottom: 2px solid #19191b;
  color: #98989b;
  font-size: 24px;
  font-weight: 900;
  letter-spacing: 1.2px;
}

.empty {
  height: 104px;
  line-height: 102px;
  text-align: center;
  font-style: italic;
  font-size: 25.6px;
  color: #69696c;
}

/* loader ring, clipped by the panel's bottom edge */
.loader {
  flex: none;
  align-self: center;
  width: 40px;
  height: 40px;
  border: 8px solid #77777a;
  border-radius: 14px;
}

/* ---------- right column ---------- */

.right {
  display: flex;
  flex-direction: column;
  gap: 34px;
  min-height: 0;
  overflow: hidden;
  border-radius: 0 0 24px 24px;
}

.accounts,
.funds {
  border: 2px solid #252528;
  border-radius: 48px;
  background: #18181b;
}

.accounts {
  flex: none;
  height: 214px;
  padding: 42px;
}

.accounts-head {
  display: flex;
  align-items: center;
  justify-content: space-between;
  height: 40px;
  padding-right: 9px;
  font-size: 24px;
  font-weight: 900;
  letter-spacing: 2px;
  color: #98989b;
}

.accounts-head .icon {
  width: 26px;
  height: 26px;
  color: #fff;
}

.account {
  display: flex;
  align-items: center;
  gap: 15px;
  height: 68px;
  margin-top: 18px;
  padding: 1px 0 0 16px;
  border-radius: 26px;
  background: #14382d;
  color: #00d492;
  font-size: 25.6px;
  font-weight: 700;
}

.account .icon {
  width: 24px;
  height: 24px;
  margin-bottom: 6px;
}

.funds {
  flex: none;
  height: 900px;
  padding: 52px;
}

.funds-head {
  display: flex;
  align-items: center;
  height: 62px;
}

.funds-head > .icon {
  width: 36px;
  height: 36px;
  color: #00bc7d;
}

.funds-head h2 {
  flex: 1;
  margin: 2px 0 0 15px;
  font-size: 34px;
  font-weight: 900;
}

.funds-head code {
  margin: 0 18px 2px 0;
  font-size: 23px;
  color: #98989b;
}

.set-btn {
  display: flex;
  align-items: center;
  justify-content: center;
  gap: 9px;
  width: 118px;
  height: 62px;
  border-radius: 26px;
  background: #172923;
  color: #00d492;
  font-size: 25px;
  font-weight: 700;
}

.set-btn .icon {
  width: 19px;
  height: 19px;
}

.total {
  height: 238px;
  margin-top: 34px;
  padding: 34px 34px 0 32px;
  border: 2px solid #242427;
  border-radius: 36px;
  background: #111113;
}

.total-label {
  display: flex;
  align-items: center;
  height: 36px;
  font-weight: 700;
  letter-spacing: 1.4px;
  color: #98989b;
}

.total-label i {
  width: 44px;
  padding: 2px 0 0 4px;
  font-size: 21px;
  opacity: 0.75;
}

.total-value {
  margin-top: 24px;
  height: 84px;
  line-height: 84px;
  font-size: 66px;
  font-weight: 900;
  letter-spacing: -1.8px;
  color: #00d492;
}

.funds-row {
  display: flex;
  justify-content: space-between;
  margin-top: 412px;
  color: #8a8a8e;
}

.funds-row code {
  color: #d98b0a;
}

/* ---------- tour popup ---------- */

.tour {
  position: absolute;
  right: 48px;
  bottom: 48px;
  width: 716px;
  height: 472px;
  padding: 50px 44px 0 42px;
  overflow: hidden;
  border: 4px solid #28282b;
  border-radius: 46px;
  background: rgba(11, 11, 15, 0.97);
}

.tour-progress {
  position: absolute;
  left: 0;
  top: 0;
  width: 100%;
  height: 6px;
  background: #1d1d21;
}

.tour-progress i {
  display: block;
  width: 7.7%;
  height: 6px;
  background: #10b981;
}

.tour-top {
  display: flex;
  align-items: center;
  height: 68px;
  color: #8a8a8e;
}

.tour-icon {
  width: 68px;
  height: 68px;
  border-radius: 26px;
  display: flex;
  align-items: center;
  justify-content: center;
  background: #0e2a23;
  color: #10b981;
  box-shadow: 0 8px 36px rgba(16, 185, 129, 0.3);
}

.dots {
  flex: 1;
  display: flex;
  gap: 8.4px;
  margin: 0 0 2px 20px;
}

.dots i {
  width: 10px;
  height: 10px;
  border-radius: 5px;
  background: #1b1b20;
}

.dots .on {
  width: 33px;
  background: #10b981;
}

.tour-top .icon {
  width: 32px;
  height: 32px;
}

.tour-top > .icon {
  width: 26px;
  height: 26px;
  margin: 0 16px 2px 0;
}

.tour-top > .min {
  width: 22px;
  margin: 3px 44px 0 0;
}

.tour h3 {
  display: flex;
  align-items: center;
  height: 40px;
  margin-top: 33px;
  font-size: 29.6px;
  font-weight: 900;
  color: #ececee;
}

.tour h3 i {
  width: 47px;
  font-size: 25px;
  padding: 2px 0 0 4px;
}

.tour p {
  height: 40px;
  line-height: 40px;
  margin-top: 12px;
  font-size: 25.5px;
  color: #6f6f73;
}

.next {
  display: flex;
  align-items: center;
  justify-content: center;
  gap: 13px;
  height: 76px;
  margin-top: 29px;
  padding-top: 1px;
  border-radius: 26px;
  background: linear-gradient(135deg, #0f9f70, #10b981);
  box-shadow: 0 8px 40px rgba(16, 185, 129, 0.3);
  font-size: 25.6px;
  font-weight: 900;
}

.next .icon {
  width: 26px;
  height: 26px;
}

.skip {
  margin-top: 36px;
  text-align: center;
  font-size: 25.4px;
  color: #69696d;
}

.skip span {
  border-bottom: 2px solid #69696d;
}
```
